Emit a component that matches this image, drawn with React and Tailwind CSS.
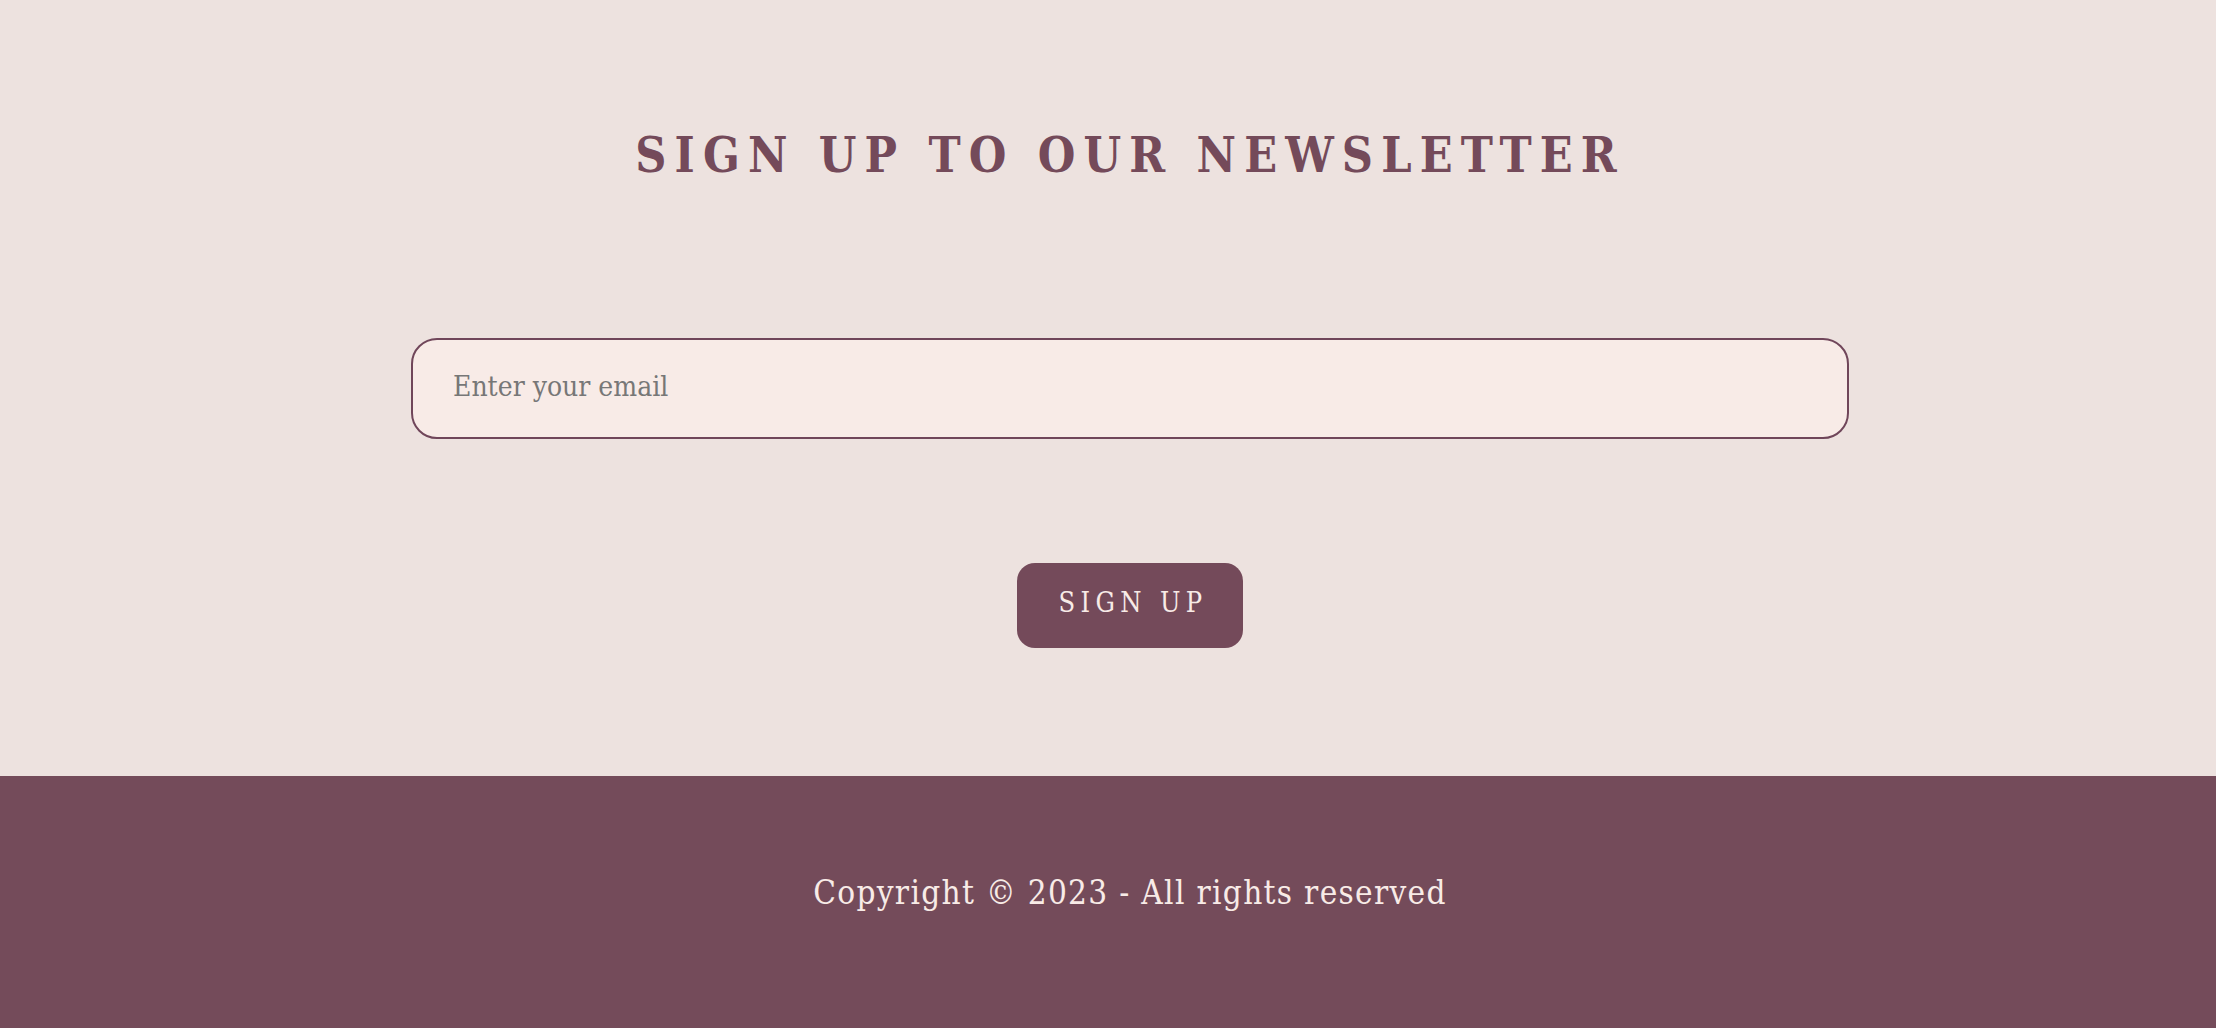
export default function App() {
  return (
    <div className="w-full min-h-screen flex flex-col bg-[#ede2df]">
      <section className="h-[776px] flex flex-col items-center bg-[#ede2df] pl-[44px]">
        <h1 className="mt-[123px] text-[48px] leading-[64px] font-bold tracking-[0.17em] text-[#744a5a] [font-family:'DejaVu_Serif_Condensed','DejaVu_Serif',serif]">
          SIGN UP TO OUR NEWSLETTER
        </h1>
        <input
          type="email"
          placeholder="Enter your email"
          className="mt-[151px] w-[1438px] h-[101px] rounded-[26px] border-2 border-[#70465a] bg-[#f8ebe7] pl-[40px] pb-[4px] text-[28px] text-[#555] placeholder:text-[#777] outline-none [font-family:'DejaVu_Serif_Condensed','DejaVu_Serif',serif]"
        />
        <button className="mt-[124px] w-[226px] h-[85px] rounded-[18px] bg-[#744a5a] text-[#f8ebe7] text-[27px] tracking-[0.2em] pl-[6px] pb-[4px] [font-family:'DejaVu_Serif_Condensed','DejaVu_Serif',serif]">
          SIGN UP
        </button>
      </section>
      <footer className="h-[252px] bg-[#744b5a] flex justify-center pt-[97px] pl-[44px]">
        <p className="text-[33px] leading-[40px] text-[#f8ebe7] tracking-[0.04em] [font-family:'DejaVu_Serif_Condensed','DejaVu_Serif',serif]">
          Copyright © 2023 - All rights reserved
        </p>
      </footer>
    </div>
  );
}
